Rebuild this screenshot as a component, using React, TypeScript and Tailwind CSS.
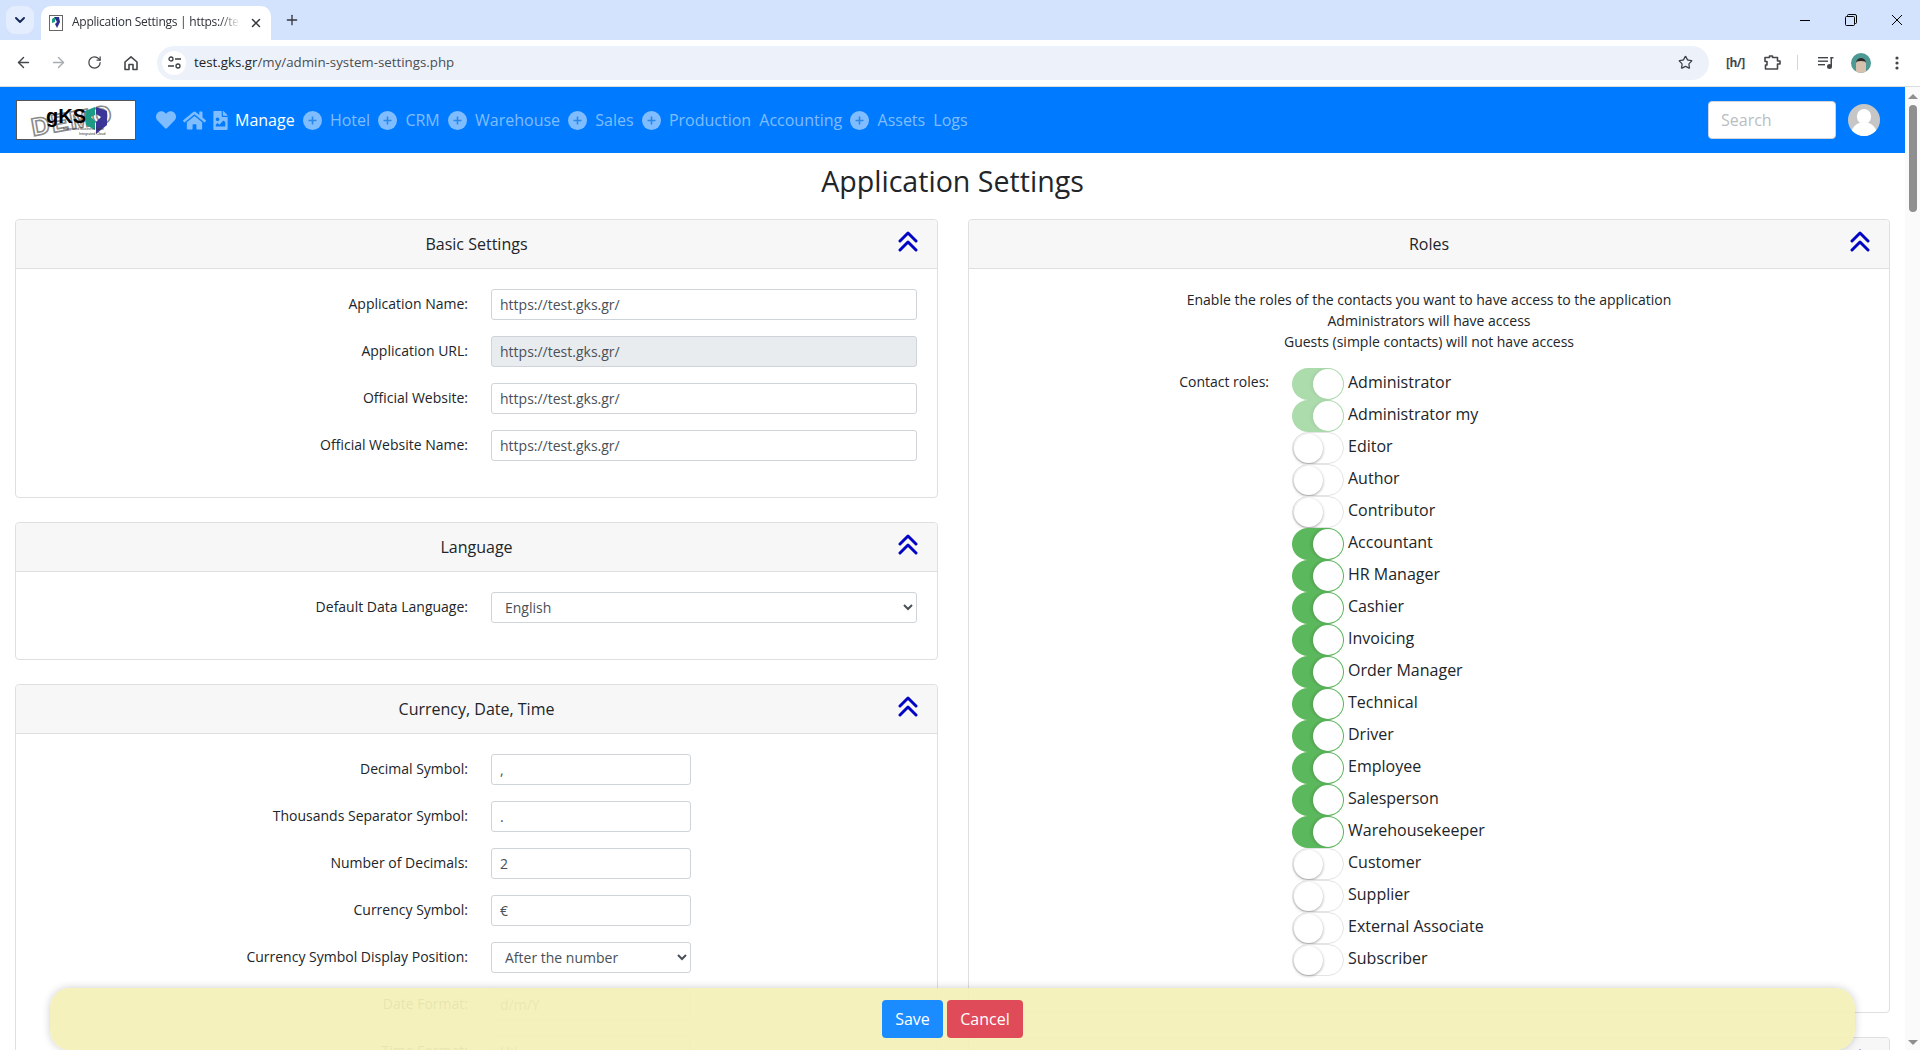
import React from "react";
import { FaHeart, FaHome, FaFileImage } from "react-icons/fa";
import { ArrowLeft, ArrowRight, RotateCw, Star, X, Plus, ChevronDown } from "lucide-react";

const nav: [string, boolean][] = [
  ["Hotel", true], ["CRM", true], ["Warehouse", true], ["Sales", true],
  ["Production", true], ["Accounting", false], ["Assets", true], ["Logs", false],
];

const roles: [string, "dim" | "on" | "off"][] = [
  ["Administrator", "dim"], ["Administrator my", "dim"], ["Editor", "off"], ["Author", "off"], ["Contributor", "off"],
  ["Accountant", "on"], ["HR Manager", "on"], ["Cashier", "on"], ["Invoicing", "on"], ["Order Manager", "on"],
  ["Technical", "on"], ["Driver", "on"], ["Employee", "on"], ["Salesperson", "on"], ["Warehousekeeper", "on"],
  ["Customer", "off"], ["Supplier", "off"], ["External Associate", "off"], ["Subscriber", "off"],
];

function Chevrons() {
  return (
    <svg width="20" height="21" viewBox="0 0 20 21" fill="none" stroke="#0404c4" strokeWidth="3" strokeLinecap="round" strokeLinejoin="round" className="-mt-[5px] mx-auto">
      <polyline points="2,10 10,2 18,10" />
      <polyline points="2,19 10,11 18,19" />
    </svg>
  );
}

function PlusCircle() {
  return (
    <svg width="19" height="19" viewBox="0 0 19 19" className="ml-[8.15px] shrink-0">
      <circle cx="9.5" cy="9.5" r="9.5" fill="#80bdff" />
      <path d="M9.5 5.5 V13.5 M5.5 9.5 H13.5" stroke="#2a88e8" strokeWidth="1.6" />
    </svg>
  );
}

function Card({ title, className, children }: { title: string; className?: string; children?: React.ReactNode }) {
  return (
    <section className={`border border-[#dfdfdf] rounded-[4px] bg-white shrink-0 ${className ?? ""}`}>
      <header className="h-[49px] bg-[#f7f7f7] border-b border-[#dfdfdf] rounded-t-[4px] px-[9px] grid grid-cols-[40px_1fr_40px] items-center">
        <span />
        <span className="text-center text-[16px] text-[#212529]">{title}</span>
        <Chevrons />
      </header>
      {children}
    </section>
  );
}

function Row({ label, children }: { label: string; children: React.ReactNode }) {
  return (
    <div className="flex items-center h-[31px] mb-[16px]">
      <label className="w-[452px] text-right text-[14px] text-[#212529] shrink-0 mb-[2px]">{label}</label>
      <div className="ml-[23px]">{children}</div>
    </div>
  );
}

function Field({ value, wide, disabled }: { value: string; wide?: boolean; disabled?: boolean }) {
  return (
    <input
      readOnly
      value={value}
      className={`block h-[31px] ${wide ? "w-[426px]" : "w-[200px]"} px-[8px] text-[14px] text-[#495057] border border-[#ced4da] rounded-[3px] ${disabled ? "bg-[#e9ecef]" : "bg-white"}`}
    />
  );
}

function Sel({ value, wide }: { value: string; wide?: boolean }) {
  return (
    <select
      defaultValue={value}
      className={`block h-[31px] ${wide ? "w-[426px]" : "w-[200px]"} pl-[9px] text-[14px] text-[#495057] border border-[#ced4da] rounded-[3px] bg-white`}
    >
      <option>{value}</option>
    </select>
  );
}

function Toggle({ state }: { state: "dim" | "on" | "off" }) {
  const on = state !== "off";
  return (
    <div className={`w-[52px] h-[32px] shrink-0 rounded-full flex p-[1px] ${on ? "justify-end bg-[#5cb85c]" : "justify-start bg-white border border-[#e4e4e4]"} ${state === "dim" ? "opacity-50" : ""}`}>
      <div className={`${on ? "w-[30px] h-[30px] shadow-[-2px_0_3px_rgba(0,0,0,0.12)]" : "w-[29px] h-[29px] shadow-[0_1px_3px_rgba(0,0,0,0.35)]"} rounded-full bg-white shrink-0`} />
    </div>
  );
}

function Logo() {
  return (
    <div className="w-[120px] h-[40px] bg-white border border-[#555] shrink-0">
      <svg width="118" height="38" viewBox="0 0 118 38">
        <text x="16" y="35" fontFamily="Liberation Sans, sans-serif" fontSize="25" fontWeight="700" letterSpacing="2" fill="#fff" stroke="#8a8a8a" strokeWidth="1.6" transform="rotate(-10 16 35)">DEMO</text>
        <text x="29" y="22" fontFamily="Liberation Sans, sans-serif" fontSize="20" fontWeight="700" fill="#000">gKS</text>
        <path d="M68 10 L78 6 L78 14 L74 16 L78 20 L78 29 L69 24 Z" fill="#1c9a84" />
        <path d="M79 6 L90 10 L90 24 L79 33 L79 21 L84 16 L79 13 Z" fill="#3a3596" />
        <text x="46" y="29" fontFamily="Liberation Sans, sans-serif" fontSize="3.6" fill="#333">Integrated Business Suite</text>
        <text x="62" y="34" fontFamily="Liberation Sans, sans-serif" fontSize="3.6" fill="#333">Integrated Cloud</text>
      </svg>
    </div>
  );
}

export default function App() {
  return (
    <div className="w-[1920px] h-[1050px] overflow-hidden flex flex-col bg-white relative font-['Open_Sans',sans-serif] text-[#212529]">
      {/* tab strip */}
      <div className="h-[40px] bg-[#d3e3fd] flex items-end shrink-0 pl-[6px]">
        <div className="w-[28px] h-[28px] mb-[6px] bg-[#e4edfd] rounded-[9px] flex items-center justify-center">
          <ChevronDown size={16} strokeWidth={3} className="text-[#1a2b57]" />
        </div>
        <div className="ml-[7px] w-[230px] h-[34px] bg-white rounded-t-[10px] flex items-center pl-[8px]">
          <svg width="14" height="16" viewBox="0 0 14 16" className="shrink-0">
            <rect x="0.5" y="0.5" width="13" height="15" fill="#fff" stroke="#666" />
            <path d="M5 2 L10 2 L11 7 L8 13 L6 9 L8 7 Z" fill="#2c2f8e" />
            <path d="M3 4 L6 2 L6 7 L3 8 Z" fill="#1c9a84" />
          </svg>
          <span className="ml-[9px] mb-[2px] text-[12px] tracking-[-0.25px] text-[#2d3137] w-[168px] overflow-hidden whitespace-nowrap [mask-image:linear-gradient(to_right,black_88%,transparent)]">Application Settings | https://test.gks.gr/my</span>
          <X size={14} strokeWidth={2.5} className="ml-[9px] text-[#33373d]" />
        </div>
        <Plus size={16} strokeWidth={2} className="ml-[13px] mb-[12px] text-[#33373d]" />
        <div className="flex-1" />
        <div className="flex items-center h-[40px]">
          <div className="w-[10px] h-[1px] bg-black mr-[35px]" />
          <svg width="12" height="12" viewBox="0 0 12 12" fill="none" stroke="#000" className="mr-[34px]">
            <rect x="0.5" y="2.5" width="9" height="9" rx="1" fill="#d3e3fd" />
            <path d="M2.5 2.5 V1.5 a1 1 0 0 1 1 -1 H10 a1.5 1.5 0 0 1 1.5 1.5 V8.5 a1 1 0 0 1 -1 1 H9.5" />
          </svg>
          <svg width="12" height="12" viewBox="0 0 12 12" stroke="#000" className="mr-[17px]">
            <path d="M1 1 L11 11 M11 1 L1 11" />
          </svg>
        </div>
      </div>
      {/* toolbar */}
      <div className="h-[47px] bg-white border-b border-[#dadce0] shrink-0 flex items-center pb-[1px] text-[#44474a]">
        <ArrowLeft size={17} strokeWidth={2} className="ml-[15px]" />
        <ArrowRight size={17} strokeWidth={2} className="ml-[18px] text-[#a9acaf]" />
        <RotateCw size={15} strokeWidth={2} className="ml-[20px]" />
        <svg width="16" height="16" viewBox="0 0 16 16" fill="none" stroke="#44474a" strokeWidth="1.6" className="ml-[21px]">
          <path d="M2 7 L8 1.8 L14 7 V14.5 H10 V9.5 H6 V14.5 H2 Z" strokeLinejoin="round" />
        </svg>
        <div className="ml-[18px] w-[1552px] h-[34px] bg-[#edf2fa] rounded-full flex items-center pl-[5px] pr-[16px]">
          <div className="w-[24px] h-[24px] rounded-full bg-white flex items-center justify-center">
            <svg width="13" height="13" viewBox="0 0 13 13" fill="none" stroke="#3c4043" strokeWidth="1.3">
              <circle cx="3" cy="3" r="2" />
              <path d="M7 3 H13 M0 10 H6" />
              <circle cx="10" cy="10" r="2" />
            </svg>
          </div>
          <span className="ml-[8px] text-[13.3px] whitespace-nowrap"><span className="text-[#1f1f1f]">test.gks.gr</span><span className="text-[#4b4e52]">/my/admin-system-settings.php</span></span>
          <div className="flex-1" />
          <Star size={15} strokeWidth={2} className="text-[#3c4043]" />
        </div>
        <span className="ml-[17px] text-[12px] font-bold text-[#44474a] tracking-[-0.5px] w-[18px] text-center">[h/]</span>
        <svg width="17" height="15" viewBox="0 0 17 15" fill="none" stroke="#44474a" strokeWidth="1.6" className="ml-[20px]">
          <path d="M1 2.5 H5.5 V1 H8.5 V2.5 H13.5 V6 H16 V9 H13.5 V14 H1.5 V10 H3 V6.5 H1 Z" strokeLinejoin="round" />
        </svg>
        <div className="ml-[16px] w-[1px] h-[15px] bg-[#c6d8f6]" />
        <svg width="16" height="12" viewBox="0 0 16 12" fill="#44474a" className="ml-[20px]">
          <rect x="0" y="0" width="10" height="1.4" />
          <rect x="0" y="3.5" width="10" height="1.4" />
          <rect x="0" y="7" width="7" height="1.4" />
          <rect x="12.5" y="0" width="3" height="1.5" />
          <rect x="12.5" y="0" width="1.5" height="9" />
          <circle cx="11.5" cy="9.5" r="2.5" />
        </svg>
        <div className="ml-[17px] w-[20px] h-[20px] rounded-full bg-[#4d9a94] flex items-end justify-center overflow-hidden">
          <div className="w-[10px] h-[15px] rounded-t-full bg-[#d6c0ae] border-t-[3px] border-[#2d2a28]" />
        </div>
        <svg width="4" height="14" viewBox="0 0 4 14" fill="#44474a" className="ml-[24px]">
          <circle cx="2" cy="2" r="1.6" /><circle cx="2" cy="7" r="1.6" /><circle cx="2" cy="12" r="1.6" />
        </svg>
      </div>

      {/* page + scrollbar */}
      <div className="flex flex-1 min-h-0">
        <div className="w-[1905px] shrink-0 flex flex-col min-h-0">
          <nav className="h-[66px] bg-[#007bff] shrink-0 flex items-center pl-[16px] pr-[25px] text-[16px] text-[#80bdff]">
            <Logo />
            <FaHeart size={20} className="ml-[20px] shrink-0" />
            <FaHome size={23} className="ml-[7px] shrink-0" />
            <FaFileImage size={19} className="ml-[5px] shrink-0" />
            <span className="ml-[5px] text-white">Manage</span>
            {nav.map(([t, plus]) => (
              <React.Fragment key={t}>
                {plus && <PlusCircle />}
                <span className="ml-[8.15px]">{t}</span>
              </React.Fragment>
            ))}
            <div className="flex-1" />
            <div className="w-[128px] h-[38px] bg-white border border-[#ced4da] rounded-[4px] flex items-center pl-[12px] text-[#b9bdc2]">Search</div>
            <div className="ml-[12px] w-[32px] h-[32px] rounded-full bg-[#c6c6c6] overflow-hidden flex flex-col items-center">
              <div className="w-[14px] h-[15px] rounded-full bg-white mt-[5px] shrink-0" />
              <div className="w-[26px] h-[14px] rounded-t-full bg-white -mt-[2px] shrink-0" />
            </div>
          </nav>
          <div className="flex-1 min-h-0 overflow-hidden px-[15px]">
            <h1 className="h-[57px] mb-[9px] flex items-center justify-center text-[28.6px] text-[#212529]">Application Settings</h1>
            <div className="grid grid-cols-[923px_922px] gap-x-[30px] items-start">
              <div className="flex flex-col gap-[24px]">
                <Card title="Basic Settings">
                  <div className="pt-[20px] pb-[20px]">
                    <Row label="Application Name:"><Field wide value="https://test.gks.gr/" /></Row>
                    <Row label="Application URL:"><Field wide disabled value="https://test.gks.gr/" /></Row>
                    <Row label="Official Website:"><Field wide value="https://test.gks.gr/" /></Row>
                    <Row label="Official Website Name:"><Field wide value="https://test.gks.gr/" /></Row>
                  </div>
                </Card>
                <Card title="Language">
                  <div className="pt-[20px] pb-[20px]">
                    <Row label="Default Data Language:"><Sel wide value="English" /></Row>
                  </div>
                </Card>
                <Card title="Currency, Date, Time">
                  <div className="pt-[20px] pb-[20px]">
                    <Row label="Decimal Symbol:"><Field value="," /></Row>
                    <Row label="Thousands Separator Symbol:"><Field value="." /></Row>
                    <Row label="Number of Decimals:"><Field value="2" /></Row>
                    <Row label="Currency Symbol:"><Field value="€" /></Row>
                    <Row label="Currency Symbol Display Position:"><Sel value="After the number" /></Row>
                    <Row label="Date Format:"><Field value="d/m/Y" /></Row>
                    <Row label="Time Format:"><Field value="H:i" /></Row>
                  </div>
                </Card>
              </div>
              <div className="flex flex-col gap-[24px]">
                <Card title="Roles" className="h-[794px]">
                  <div className="pt-[20px] text-[14px] text-center leading-[21px]">
                    <p>Enable the roles of the contacts you want to have access to the application</p>
                    <p>Administrators will have access</p>
                    <p>Guests (simple contacts) will not have access</p>
                  </div>
                  <div className="flex mt-[16px]">
                    <div className="w-[300px] text-right text-[14px] leading-[21px] pt-[3px]">Contact roles:</div>
                    <div className="ml-[23px] flex flex-col">
                      {roles.map(([name, s]) => (
                        <div key={name} className="flex items-start h-[32px]">
                          <Toggle state={s} />
                          <span className="ml-[4px] text-[16px] leading-[28px] text-[#212529]">{name}</span>
                        </div>
                      ))}
                    </div>
                  </div>
                </Card>
                <Card title="" />
              </div>
            </div>
          </div>
        </div>
        {/* scrollbar */}
        <div className="w-[15px] bg-[#fafafa] flex flex-col items-center shrink-0">
          <div className="mt-[7px] w-0 h-0 border-x-[5px] border-x-transparent border-b-[5px] border-b-[#8f8f8f]" />
          <div className="mt-[6px] w-[8px] h-[107px] rounded-full bg-[#8f8f8f]" />
          <div className="flex-1" />
          <div className="mb-[5px] w-0 h-0 border-x-[5px] border-x-transparent border-t-[5px] border-t-[#8f8f8f]" />
        </div>
      </div>

      {/* floating action bar */}
      <div className="absolute left-[50px] bottom-0 w-[1805px] h-[62px] rounded-[20px] bg-[#f3f0b8]/[0.94] shadow-[0_0_8px_rgba(0,0,0,0.2)] flex items-center justify-center gap-[4px]">
        <button className="h-[38px] w-[61px] rounded-[4px] bg-[#1a8cff] text-white text-[16px]">Save</button>
        <button className="h-[38px] w-[76px] rounded-[4px] bg-[#e04b59] text-white text-[16px]">Cancel</button>
      </div>
    </div>
  );
}
